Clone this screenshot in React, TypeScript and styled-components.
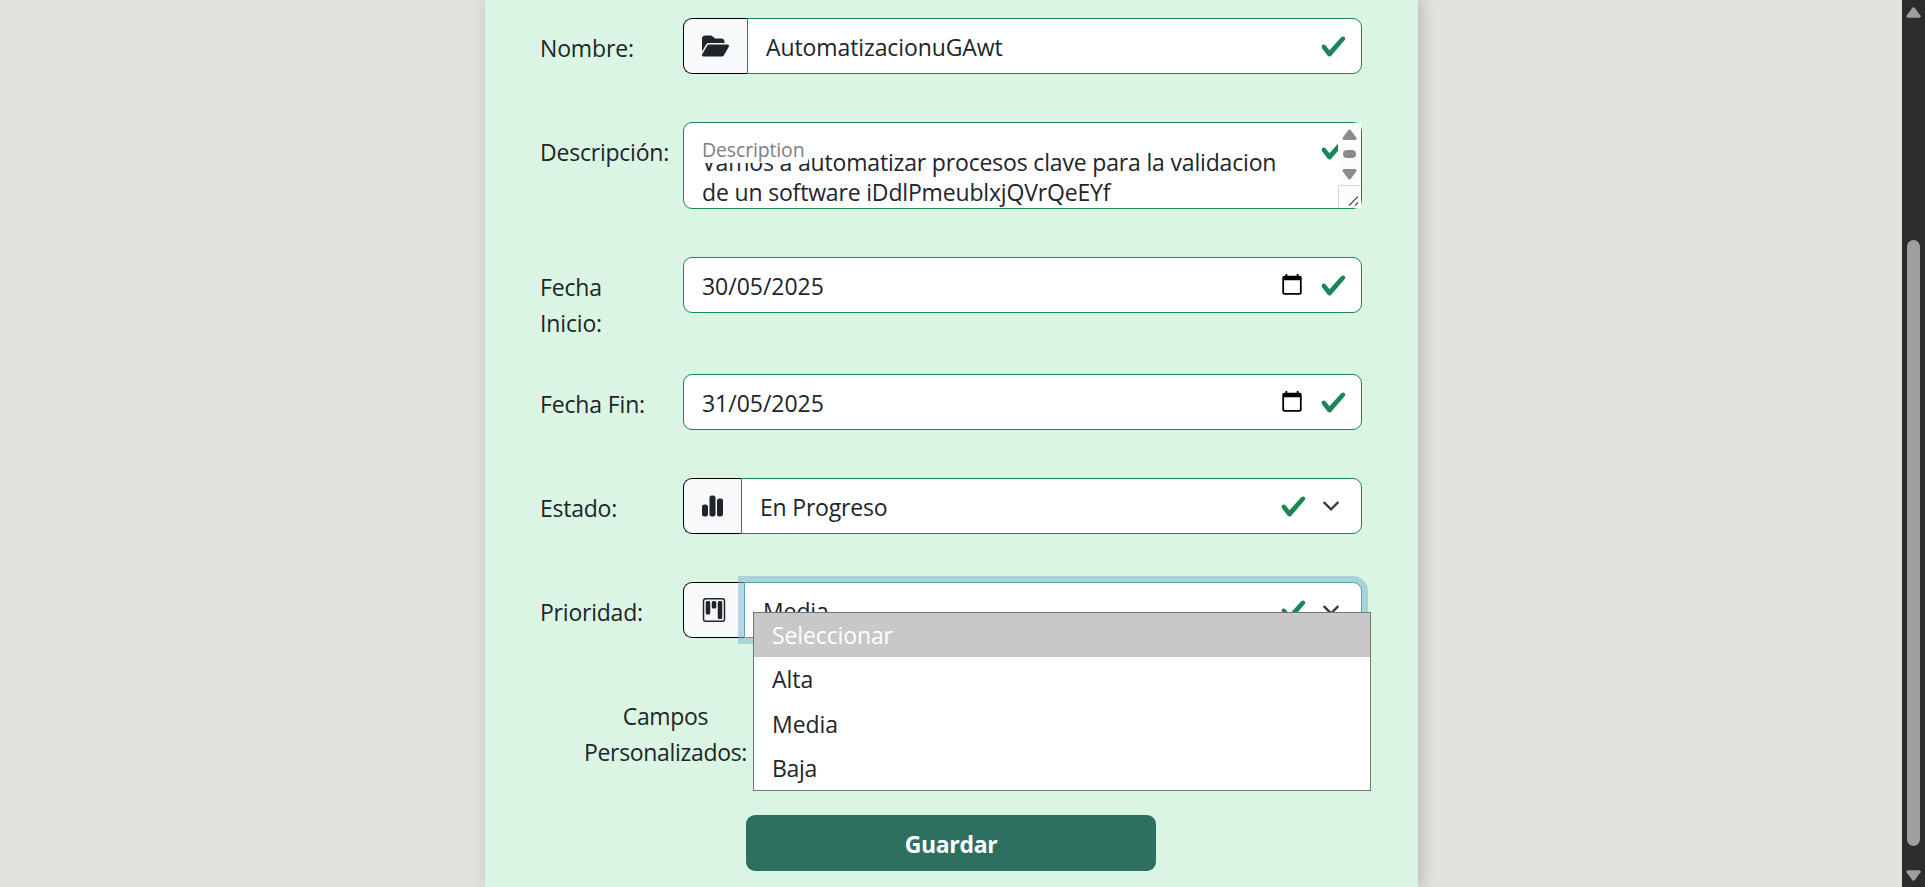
import React from "react";
import styled, { createGlobalStyle, css } from "styled-components";
import { FaFolderOpen, FaChartSimple } from "react-icons/fa6";
import { BsKanban } from "react-icons/bs";

const GlobalStyle = createGlobalStyle`
  *, *::before, *::after { box-sizing: border-box; }
  body {
    margin: 0;
    overflow: hidden;
    background: #e2e1dc;
    color: #212529;
    font-family: "Open Sans", "Noto Sans", sans-serif;
    font-size: 23px;
    line-height: 36px;
  }
`;

const Page = styled.div`
  display: flex;
  justify-content: space-between;
  height: 887px;
  overflow: hidden;
`;

const Card = styled.form`
  display: flex;
  flex-direction: column;
  gap: 48px;
  width: 933px;
  height: 887px;
  margin-left: 485px;
  padding: 18px 57px 0 55px;
  background: #daf5e4;
  box-shadow: 3px 0 15px rgba(30, 10, 0, 0.2);
`;

const Row = styled.div<{ $height?: number }>`
  display: grid;
  grid-template-columns: 143px 679px;
  align-items: start;
  height: ${(p) => p.$height ?? 56}px;
`;

const Label = styled.label<{ $track?: number }>`
  padding-top: 12px;
  letter-spacing: ${(p) => p.$track ?? -0.15}px;
`;

const Group = styled.div`
  position: relative;
  display: flex;
  height: 56px;
`;

const Addon = styled.span<{ $icon: number }>`
  display: flex;
  align-items: center;
  padding: 0 18px;
  border: 1px solid #000;
  border-right: 0;
  border-radius: 9px 0 0 9px;
  background: #f8f9fb;
  svg {
    display: block;
    width: ${(p) => p.$icon}px;
    height: 24px;
  }
`;

const Control = styled.div<{ $joined?: boolean; $focused?: boolean; $track?: number }>`
  position: relative;
  flex: 1;
  display: flex;
  align-items: center;
  height: 56px;
  padding: 0 14px 0 18px;
  border: 1px solid #198754;
  border-radius: ${(p) => (p.$joined ? "0 9px 9px 0" : "9px")};
  background: #fff;
  letter-spacing: ${(p) => p.$track ?? -0.1}px;
  ${(p) =>
    p.$focused &&
    css`
      border-color: #55a3b7;
      box-shadow: 0 0 0 6px rgba(117, 180, 206, 0.5);
    `}
`;

const Value = styled.span`
  flex: 1;
  padding-top: 1px;
  white-space: pre;
`;

const Marks = styled.span<{ $gap: number; $end?: number }>`
  display: flex;
  align-items: center;
  gap: ${(p) => p.$gap}px;
  padding-right: ${(p) => p.$end ?? 0}px;
  svg { display: block; }
`;

const TextArea = styled.div`
  position: relative;
  display: flex;
  height: 87px;
  padding: 24px 0 0 18px;
  border: 1px solid #198754;
  border-radius: 9px;
  background: #fff;
`;

const TextLines = styled.div`
  flex: 1;
  line-height: 30px;
  letter-spacing: -0.17px;
  white-space: pre;
`;

const FloatingLabel = styled.span`
  position: absolute;
  top: 12px;
  left: 18px;
  width: 106px;
  height: 28px;
  background: #fff;
  color: #7d7f82;
  font-size: 19.5px;
  line-height: 29px;
  letter-spacing: -0.15px;
`;

const AreaMark = styled.span`
  position: absolute;
  top: 13px;
  right: 14px;
  svg { display: block; }
`;

const AreaScroll = styled.span`
  position: absolute;
  top: 0;
  right: 0;
  width: 23px;
  height: 85px;
  background: #fcfcfc;
  svg { display: block; }
`;

const Menu = styled.ul`
  position: absolute;
  z-index: 2;
  top: 30px;
  left: 70px;
  width: 618px;
  height: 179px;
  margin: 0;
  padding: 0;
  border: 1px solid #767676;
  background: #fff;
  list-style: none;
`;

const Option = styled.li<{ $active?: boolean; $track?: number }>`
  height: 44.25px;
  padding-left: 18px;
  line-height: 45px;
  letter-spacing: ${(p) => p.$track ?? -0.05}px;
  background: ${(p) => (p.$active ? "#c8c8c8" : "transparent")};
  color: ${(p) => (p.$active ? "#fff" : "inherit")};
`;

const CustomFields = styled.div`
  width: 163px;
  height: 81px;
  margin-left: 44px;
  padding-top: 12px;
  text-align: center;
  letter-spacing: -0.33px;
`;

const SaveButton = styled.button`
  width: 410px;
  height: 56px;
  flex: none;
  margin-left: 206px;
  padding: 2px 0 0;
  border: 0;
  border-radius: 9px;
  background: #2e7060;
  color: #fff;
  font: bold 23px "Open Sans", "Noto Sans", sans-serif;
  letter-spacing: -0.35px;
`;

const ScrollTrack = styled.div`
  display: flex;
  flex-direction: column;
  align-items: center;
  justify-content: space-between;
  width: 23px;
  height: 887px;
  padding: 7px 0 6px;
  background: #2c2c2c;
  svg { display: block; }
`;

const ScrollThumb = styled.div`
  width: 13px;
  height: 607px;
  margin-top: 222px;
  margin-bottom: 24px;
  border-radius: 6.5px;
  background: #9f9f9f;
`;

const Check = () => (
  <svg width="27" height="27" viewBox="0 0 8 8">
    <path
      fill="#198754"
      d="M2.3 6.73.6 4.53c-.4-1.04.46-1.4 1.1-.8l1.1 1.4 3.4-3.8c.6-.63 1.6-.27 1.2.7l-4 4.6c-.43.5-.8.4-1.1.1z"
    />
  </svg>
);

const Calendar = () => (
  <svg width="24" height="24" viewBox="0 0 24 24">
    <path
      fill="#000"
      d="M20.2 2.7H18.5V.9H16.7V2.7H7.3V.9H5.5V2.7H4.2C3.1 2.700 2.300 3.500 2.300 4.600V19.800C2.300 20.900 3.100 21.700 4.200 21.700H19.800C20.900 21.700 21.700 20.900 21.700 19.800V4.600C21.700 3.500 21 2.700 20.200 2.700ZM19.900 20H4.100V7.200H19.900Z"
    />
  </svg>
);

const Chevron = () => (
  <svg width="18" height="18" viewBox="0 0 16 16">
    <path fill="none" stroke="#343a40" strokeLinecap="round" strokeLinejoin="round" strokeWidth="2" d="m2 5 6 6 6-6" />
  </svg>
);

const Arrow = ({ down }: { down?: boolean }) => (
  <svg width="15" height="11" viewBox="0 0 15 11">
    <path
      fill="#9f9f9f"
      transform={down ? "rotate(180 7.5 5.5)" : undefined}
      d="M6 1.2Q7.500-.6 9 1.200L14.400 8.600Q15.200 10.700 13.200 10.700H1.800Q-.2 10.700.6 8.600Z"
    />
  </svg>
);

const AreaScrollbar = () => (
  <svg width="23" height="85" viewBox="0 0 23 85">
    <g fill="#8b8b8b">
      <path d="M10 7.500Q11.500 5.700 13 7.500L18.200 14.500Q19 17 17 17H6Q4 17 4.800 14.500Z" />
      <rect x="5" y="27" width="13" height="8" rx="4" />
      <path d="M10 55.500Q11.500 57.300 13 55.500L18.200 48.500Q19 46 17 46H6Q4 46 4.800 48.500Z" />
    </g>
    <path d="M.5 85V62.500H23" fill="none" stroke="#d5d5d5" />
    <path d="M11 82.500 20 73.500M17 82.500l3-3" fill="none" stroke="#555" strokeWidth="1.200" />
  </svg>
);

const DateField = ({ value }: { value: string }) => (
  <Control $track={-0.03}>
    <Value>{value}</Value>
    <Marks $gap={16}>
      <Calendar />
      <Check />
    </Marks>
  </Control>
);

const SelectMarks = () => (
  <Marks $gap={15} $end={7}>
    <Check />
    <Chevron />
  </Marks>
);

export default function App() {
  return (
    <>
      <GlobalStyle />
      <Page>
        <Card>
          <Row>
            <Label>Nombre:</Label>
            <Group>
              <Addon $icon={27}>
                <FaFolderOpen />
              </Addon>
              <Control $joined>
                <Value>AutomatizacionuGAwt</Value>
                <Marks $gap={0}>
                  <Check />
                </Marks>
              </Control>
            </Group>
          </Row>

          <Row $height={87}>
            <Label $track={-0.22}>Descripción:</Label>
            <TextArea>
              <TextLines>{"Vamos a automatizar procesos clave para la validacion\nde un software iDdlPmeublxjQVrQeEYf"}</TextLines>
              <FloatingLabel>Description</FloatingLabel>
              <AreaMark>
                <Check />
              </AreaMark>
              <AreaScroll>
                <AreaScrollbar />
              </AreaScroll>
            </TextArea>
          </Row>

          <Row $height={69}>
            <Label>
              Fecha
              <br />
              Inicio:
            </Label>
            <DateField value="30/05/2025" />
          </Row>

          <Row>
            <Label>Fecha Fin:</Label>
            <DateField value="31/05/2025" />
          </Row>

          <Row>
            <Label $track={-0.25}>Estado:</Label>
            <Group>
              <Addon $icon={21}>
                <FaChartSimple />
              </Addon>
              <Control $joined $track={-0.2}>
                <Value>En Progreso</Value>
                <SelectMarks />
              </Control>
            </Group>
          </Row>

          <Row>
            <Label $track={-0.22}>Prioridad:</Label>
            <Group>
              <Addon $icon={24}>
                <BsKanban />
              </Addon>
              <Control $joined $focused>
                <Value>Media</Value>
                <SelectMarks />
              </Control>
              <Menu>
                <Option $active $track={-0.12}>
                  Seleccionar
                </Option>
                <Option>Alta</Option>
                <Option>Media</Option>
                <Option $track={-0.3}>Baja</Option>
              </Menu>
            </Group>
          </Row>

          <CustomFields>Campos Personalizados:</CustomFields>

          <SaveButton type="button">Guardar</SaveButton>
        </Card>

        <ScrollTrack>
          <Arrow />
          <ScrollThumb />
          <Arrow down />
        </ScrollTrack>
      </Page>
    </>
  );
}
